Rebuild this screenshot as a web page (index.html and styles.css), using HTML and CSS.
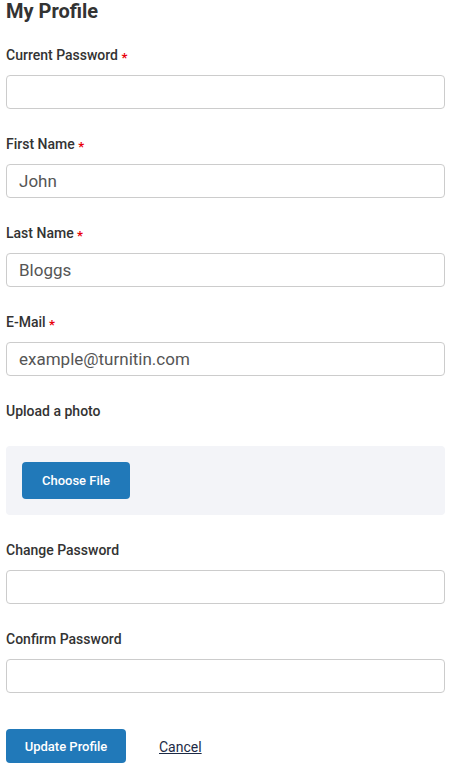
FILE: index.html
```html
<!DOCTYPE html>
<html lang="en">
<head>
<meta charset="utf-8">
<title>My Profile</title>
<link rel="stylesheet" href="styles.css">
</head>
<body>
<main class="page">
  <h1 class="title">My Profile</h1>
  <form class="form">
    <div class="field">
      <label class="label">Current Password <span class="req">*</span></label>
      <input class="input" type="password">
    </div>
    <div class="field">
      <label class="label">First Name <span class="req">*</span></label>
      <input class="input" type="text" value="John">
    </div>
    <div class="field">
      <label class="label">Last Name <span class="req">*</span></label>
      <input class="input" type="text" value="Bloggs">
    </div>
    <div class="field">
      <label class="label">E-Mail <span class="req">*</span></label>
      <input class="input" type="text" value="example@turnitin.com">
    </div>
    <div class="field">
      <label class="label">Upload a photo</label>
      <div class="upload">
        <button type="button" class="btn btn-file">Choose File</button>
      </div>
    </div>
    <div class="field">
      <label class="label">Change Password</label>
      <input class="input" type="password">
    </div>
    <div class="field">
      <label class="label">Confirm Password</label>
      <input class="input" type="password">
    </div>
    <div class="actions">
      <button type="button" class="btn btn-update">Update Profile</button>
      <a class="cancel" href="#">Cancel</a>
    </div>
  </form>
</main>
</body>
</html>
```

FILE: styles.css
```css
* { box-sizing: border-box; }

html, body {
  margin: 0;
  padding: 0;
  background: #ffffff;
}

body {
  font-family: Roboto, "Liberation Sans", Arial, sans-serif;
  color: #333333;
}

.page {
  padding: 0 8px 0 6px;
}

.title {
  margin: -1px 0 0 0;
  font-size: 20px;
  line-height: 24px;
  font-weight: 700;
  color: #333333;
}

.form {
  margin-top: 22px;
}

.field {
  display: flex;
  flex-direction: column;
  margin-bottom: 25px;
}

.label {
  display: block;
  height: 20px;
  font-size: 14px;
  line-height: 20px;
  font-weight: 500;
  color: #333333;
  margin-bottom: 10px;
}

.req {
  color: #e8000b;
  font-size: 13px;
  line-height: 0;
  font-weight: 700;
  vertical-align: -2px;
}

.input {
  display: block;
  width: 100%;
  height: 34px;
  border: 1px solid #cccccc;
  border-radius: 4px;
  padding: 0 12px;
  font-family: Roboto, "Liberation Sans", Arial, sans-serif;
  font-size: 17px;
  color: #555555;
  background: #ffffff;
  outline: none;
}

.upload {
  margin-top: 15px;
  background: #f3f4f8;
  border-radius: 4px;
  padding: 16px;
  height: 69px;
}

.btn {
  border: none;
  border-radius: 4px;
  background: #2179b9;
  color: #ffffff;
  font-family: Roboto, "Liberation Sans", Arial, sans-serif;
  font-size: 13px;
  font-weight: 500;
  cursor: pointer;
}

.btn-file {
  width: 108px;
  height: 37px;
  padding: 0;
}

.btn-update {
  width: 120px;
  height: 34px;
  padding: 0;
}

.actions {
  display: flex;
  align-items: center;
  gap: 33px;
  margin-top: 36px;
}

.cancel {
  font-size: 14px;
  color: #1c2a45;
  text-decoration: underline;
  padding-top: 1px;
}
```
